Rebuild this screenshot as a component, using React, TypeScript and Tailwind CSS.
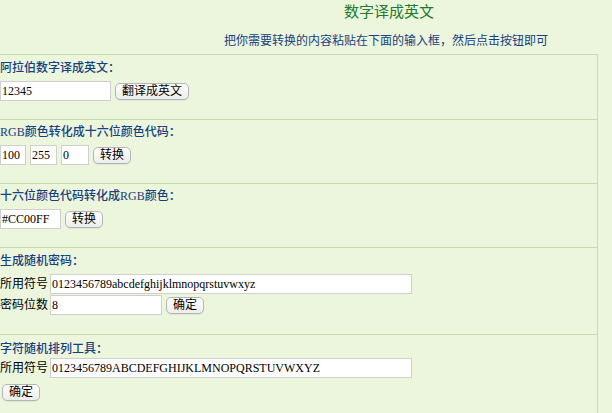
import React, { useState } from "react";

const font = { fontFamily: '"Liberation Serif", "Noto Sans CJK SC", serif' };

const Btn: React.FC<{ children: React.ReactNode; className?: string }> = ({ children, className = "" }) => (
  <button
    className={
      "h-[17px] rounded-[5px] border border-[#b4b4b4] bg-gradient-to-b from-white to-[#ededed] px-[6px] text-[12px] leading-[15px] text-black shadow-[0_1px_0_rgba(0,0,0,0.06)] " +
      className
    }
  >
    {children}
  </button>
);

const Field: React.FC<{ value: string; className?: string }> = ({ value, className = "" }) => {
  const [v, setV] = useState(value);
  return (
    <input
      value={v}
      onChange={(e) => setV(e.target.value)}
      className={
        "h-[20px] border border-[#cfcfcf] bg-white pl-[1px] text-[12px] leading-[18px] text-black outline-none " + className
      }
    />
  );
};

const Label: React.FC<{ children: React.ReactNode }> = ({ children }) => (
  <div className="h-[16px] text-[12px] font-medium leading-[16px] text-[#183f80]">{children}</div>
);

export default function App() {
  return (
    <div className="h-[413px] w-[612px] overflow-hidden bg-[#ebf6dd]" style={font}>
      <div className="h-[54px]">
        <div className="pl-[344px] pt-[3px] text-[15px] leading-[18px] text-[#237a2c]">数字译成英文</div>
        <div className="pl-[224px] pt-[13px] text-[12px] leading-[14px] text-[#183f80]">
          把你需要转换的内容粘贴在下面的输入框，然后点击按钮即可
        </div>
      </div>

      <div className="w-[598px] border-t border-r border-[#c6dcab]">
        <section className="border-b border-[#c6dcab] pt-[5px] pb-[18px]">
          <Label>阿拉伯数字译成英文：</Label>
          <div className="mt-[5px] flex items-center gap-[4px]">
            <Field value="12345" className="w-[111px]" />
            <Btn>翻译成英文</Btn>
          </div>
        </section>

        <section className="border-b border-[#c6dcab] pt-[4px] pb-[18px]">
          <Label>RGB颜色转化成十六位颜色代码：</Label>
          <div className="mt-[5px] flex items-center gap-[4px]">
            <Field value="100" className="w-[26px]" />
            <Field value="255" className="w-[27px]" />
            <Field value="0" className="w-[28px]" />
            <Btn>转换</Btn>
          </div>
        </section>

        <section className="border-b border-[#c6dcab] pt-[4px] pb-[18px]">
          <Label>十六位颜色代码转化成RGB颜色：</Label>
          <div className="mt-[5px] flex items-center gap-[4px]">
            <Field value="#CC00FF" className="w-[61px]" />
            <Btn>转换</Btn>
          </div>
        </section>

        <section className="border-b border-[#c6dcab] pt-[5px] pb-[19px]">
          <Label>生成随机密码：</Label>
          <div className="mt-[5px] flex items-center gap-[2px]">
            <span className="w-[48px] text-[12px] text-black">所用符号</span>
            <Field value="0123456789abcdefghijklmnopqrstuvwxyz" className="w-[362px]" />
          </div>
          <div className="mt-[1px] flex items-center gap-[2px]">
            <span className="w-[48px] text-[12px] text-black">密码位数</span>
            <Field value="8" className="w-[112px]" />
            <Btn className="ml-[2px]">确定</Btn>
          </div>
        </section>

        <section className="pt-[6px] pb-[20px]">
          <Label>字符随机排列工具：</Label>
          <div className="mt-[1px] flex items-center gap-[2px]">
            <span className="w-[48px] text-[12px] text-black">所用符号</span>
            <Field value="0123456789ABCDEFGHIJKLMNOPQRSTUVWXYZ" className="w-[362px]" />
          </div>
          <div className="mt-[1px] pl-[2px]">
            <Btn>确定</Btn>
          </div>
        </section>
      </div>
    </div>
  );
}
